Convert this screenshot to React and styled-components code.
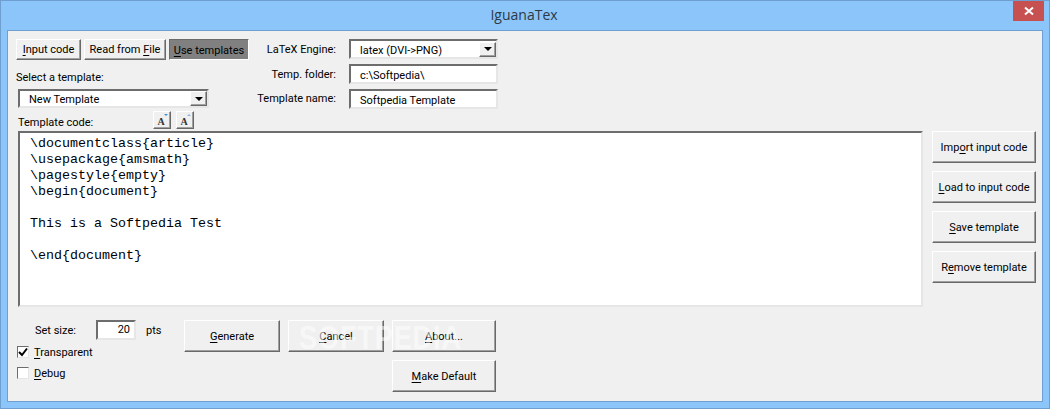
import React from 'react';
import styled, { createGlobalStyle } from 'styled-components';

const GlobalStyle = createGlobalStyle`
  html, body {
    margin: 0;
    padding: 0;
    background: #8bc5fa;
  }
  u {
    text-underline-offset: 2px;
  }
`;

const Window = styled.div`
  position: relative;
  width: 1050px;
  height: 409px;
  box-sizing: border-box;
  background: #8bc5fa;
  border: 1px solid #6f9fd0;
  display: flex;
  flex-direction: column;
  font-family: 'Roboto', sans-serif;
  font-size: 11px;
  color: #000;
  overflow: hidden;
`;

const TitleBar = styled.div`
  height: 29px;
  display: grid;
  grid-template-columns: 1fr auto 1fr;
  padding-right: 5px;
`;

const Title = styled.div`
  grid-column: 2;
  font-family: 'Open Sans', sans-serif;
  font-size: 14px;
  line-height: 28px;
  color: #2b3a48;
  padding-left: 3px;
`;

const CloseButton = styled.div`
  grid-column: 3;
  justify-self: end;
  width: 31px;
  height: 20px;
  background: #c75050;
  display: flex;
  align-items: center;
  justify-content: center;
`;

const Panel = styled.div`
  width: 1034px;
  height: 370px;
  margin-left: 6px;
  box-sizing: content-box;
  border: 1px solid #6f9fd0;
  background: #f0f0f0;
  display: flex;
  flex-direction: column;
  padding: 0;
`;

const TopArea = styled.div`
  display: flex;
  height: 92px;
  padding: 8px 0 0 8px;
`;

const LeftColumn = styled.div`
  width: 233px;
  display: flex;
  flex-direction: column;
`;

const TabRow = styled.div`
  display: flex;
  gap: 3px;
`;

const Raised = styled.button`
  box-sizing: border-box;
  padding: 0;
  margin: 0;
  font: inherit;
  color: #000;
  background: #f0f0f0;
  border: 1px solid;
  border-color: #fff #696969 #696969 #fff;
  box-shadow: inset -1px -1px 0 #a0a0a0;
  display: flex;
  align-items: center;
  justify-content: center;
  white-space: nowrap;
`;

const Tab = styled(Raised)`
  width: ${(p) => p.$w}px;
  height: 21px;
  ${(p) =>
    p.$active &&
    `
    background: #808080;
    border-color: #6a6a6a #fff #fff #6a6a6a;
    box-shadow: none;
    padding-top: 1px;
  `}
`;

const SelectLabel = styled.div`
  margin-top: 10px;
  height: 16px;
  line-height: 16px;
`;

const Sunken = styled.div`
  box-sizing: border-box;
  background: #fff;
  border: 2px solid;
  border-color: #6d6d6d #e6e6e6 #e6e6e6 #6d6d6d;
`;

const Combo = styled(Sunken)`
  width: ${(p) => p.$w}px;
  height: ${(p) => p.$h}px;
  margin-left: ${(p) => p.$ml || 0}px;
  margin-top: ${(p) => p.$mt || 0}px;
  display: flex;
  align-items: center;
  justify-content: space-between;
  padding-left: 9px;
`;

const ComboText = styled.span`
  padding-top: 2px;
`;

const ComboArrow = styled(Raised)`
  width: 17px;
  height: 15px;
  &::after {
    content: '';
    border-left: 4px solid transparent;
    border-right: 4px solid transparent;
    border-top: 4px solid #000;
  }
`;

const CodeRow = styled.div`
  display: flex;
  align-items: flex-end;
  margin-top: 3px;
  height: 18px;
  margin-left: 2px;
`;

const CodeLabel = styled.div`
  width: 135px;
  line-height: 12px;
`;

const FontButton = styled(Raised)`
  position: relative;
  width: 18px;
  height: 18px;
  margin-right: 5px;
  font-family: 'Liberation Serif', serif;
  font-weight: 700;
  font-size: 10px;
  color: #333;
  padding: 3px 2px 0 0;
`;

const FontMark = styled.span`
  position: absolute;
  top: 2px;
  right: 2px;
  width: 0;
  height: 0;
  border-left: 2.5px solid transparent;
  border-right: 2.5px solid transparent;
  ${(p) => (p.$up ? 'border-bottom: 2px solid #8bb4e0;' : 'border-top: 2px solid #3f8fd8;')}
`;

const EngineForm = styled.div`
  display: grid;
  grid-template-columns: 87px 149px;
  column-gap: 13px;
  row-gap: 5px;
  grid-auto-rows: min-content;
`;

const FieldLabel = styled.div`
  text-align: right;
  padding-top: 1px;
  line-height: ${(p) => p.$h}px;
  white-space: nowrap;
`;

const TextField = styled(Sunken)`
  width: 149px;
  height: ${(p) => p.$h}px;
  padding-left: 9px;
  line-height: 20px;
`;

const EditorRow = styled.div`
  display: flex;
  gap: 9px;
  padding-left: 10px;
`;

const Editor = styled(Sunken)`
  width: 905px;
  height: 176px;
  padding: 3px 0 0 10px;
  font-family: 'Liberation Mono', monospace;
  font-size: 13.33px;
  line-height: 16px;
  white-space: pre;
`;

const SideColumn = styled.div`
  display: flex;
  flex-direction: column;
  gap: 8px;
`;

const ActionButton = styled(Raised)`
  width: ${(p) => p.$w}px;
  height: 32px;
`;

const BottomArea = styled.div`
  display: flex;
  margin-top: 13px;
  padding-left: 9px;
  gap: 8px;
  align-items: flex-start;
`;

const OptionsColumn = styled.div`
  width: 159px;
  display: flex;
  flex-direction: column;
`;

const SizeRow = styled.div`
  display: flex;
  align-items: center;
  height: 20px;
  padding-left: 18px;
`;

const SizeLabel = styled.div`
  width: 61px;
`;

const SizeInput = styled(Sunken)`
  width: 40px;
  height: 20px;
  text-align: right;
  padding-right: 4px;
  line-height: 16px;
`;

const Pts = styled.div`
  margin-left: 10px;
`;

const CheckRow = styled.div`
  display: flex;
  align-items: center;
  gap: 5px;
  height: 13px;
  margin-top: ${(p) => p.$mt}px;
`;

const CheckBox = styled(Sunken)`
  width: 12px;
  height: 12px;
  display: flex;
  align-items: center;
  justify-content: center;
  border-width: 1px;
`;

const CheckLabel = styled.span`
  padding-top: 2px;
`;

const ButtonColumn = styled.div`
  display: flex;
  flex-direction: column;
  gap: 8px;
`;

const Watermark = styled.div`
  position: absolute;
  left: 298px;
  top: 317px;
  font-family: 'Liberation Sans', sans-serif;
  font-weight: 700;
  font-size: 34px;
  line-height: 38px;
  letter-spacing: 1px;
  color: rgba(255, 255, 255, 0.5);
  transform: scaleX(0.8);
  transform-origin: left top;
  pointer-events: none;
`;

const editorCode = `\\documentclass{article}
\\usepackage{amsmath}
\\pagestyle{empty}
\\begin{document}

This is a Softpedia Test

\\end{document}`;

const App = () => (
  <>
    <GlobalStyle />
    <Window>
      <TitleBar>
        <Title>IguanaTex</Title>
        <CloseButton>
          <svg width="10" height="10" viewBox="0 0 10 10">
            <path d="M1 1.5 L9 8.5 M9 1.5 L1 8.5" stroke="#fff" strokeWidth="2" />
          </svg>
        </CloseButton>
      </TitleBar>
      <Panel>
        <TopArea>
          <LeftColumn>
            <TabRow>
              <Tab $w={65}><span><u>I</u>nput code</span></Tab>
              <Tab $w={82}><span>Read from <u>F</u>ile</span></Tab>
              <Tab $w={80} $active><span><u>U</u>se templates</span></Tab>
            </TabRow>
            <SelectLabel>Select a template:</SelectLabel>
            <Combo $w={191} $h={19} $ml={2} $mt={3}>
              <ComboText>New Template</ComboText>
              <ComboArrow />
            </Combo>
            <CodeRow>
              <CodeLabel>Template code:</CodeLabel>
              <FontButton>A<FontMark /></FontButton>
              <FontButton>A<FontMark $up /></FontButton>
            </CodeRow>
          </LeftColumn>
          <EngineForm>
            <FieldLabel $h={19}>LaTeX Engine:</FieldLabel>
            <Combo $w={149} $h={20}>
              <ComboText>latex (DVI-&gt;PNG)</ComboText>
              <ComboArrow />
            </Combo>
            <FieldLabel $h={19}>Temp. folder:</FieldLabel>
            <TextField $h={20}>c:\Softpedia\</TextField>
            <FieldLabel $h={18}>Template name:</FieldLabel>
            <TextField $h={20}>Softpedia Template</TextField>
          </EngineForm>
        </TopArea>
        <EditorRow>
          <Editor>{editorCode}</Editor>
          <SideColumn>
            <ActionButton $w={104}><span>Imp<u>o</u>rt input code</span></ActionButton>
            <ActionButton $w={104}><span><u>L</u>oad to input code</span></ActionButton>
            <ActionButton $w={104}><span><u>S</u>ave template</span></ActionButton>
            <ActionButton $w={104}><span>R<u>e</u>move template</span></ActionButton>
          </SideColumn>
        </EditorRow>
        <BottomArea>
          <OptionsColumn>
            <SizeRow>
              <SizeLabel>Set size:</SizeLabel>
              <SizeInput>20</SizeInput>
              <Pts>pts</Pts>
            </SizeRow>
            <CheckRow $mt={5}>
              <CheckBox>
                <svg width="10" height="10" viewBox="0 0 10 10">
                  <path d="M1 5 L4 8 L9 1.5" fill="none" stroke="#000" strokeWidth="2" />
                </svg>
              </CheckBox>
              <CheckLabel><u>T</u>ransparent</CheckLabel>
            </CheckRow>
            <CheckRow $mt={8}>
              <CheckBox />
              <CheckLabel><u>D</u>ebug</CheckLabel>
            </CheckRow>
          </OptionsColumn>
          <ActionButton $w={96}><span><u>G</u>enerate</span></ActionButton>
          <ActionButton $w={96}><span><u>C</u>ancel</span></ActionButton>
          <ButtonColumn>
            <ActionButton $w={104}><span><u>A</u>bout...</span></ActionButton>
            <ActionButton $w={104}><span><u>M</u>ake Default</span></ActionButton>
          </ButtonColumn>
        </BottomArea>
      </Panel>
      <Watermark>SOFTPEDIA</Watermark>
    </Window>
  </>
);

export default App;
